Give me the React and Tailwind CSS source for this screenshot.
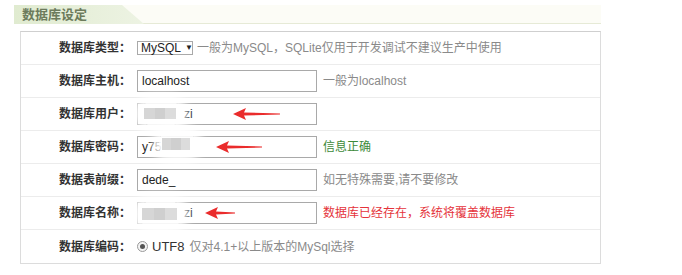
const font = "font-['Liberation_Sans','Noto_Sans_CJK_SC',sans-serif]";

function Arrow({ className, width }) {
  return (
    <svg className={className} width={width} height="14" viewBox={`0 0 ${width} 14`}>
      <path d={`M0 7 L13 1 L11 5.5 L${width} 6.5 L${width} 7.5 L11 8.5 L13 13 Z`} fill="#ea2c2c" />
    </svg>
  );
}

function Blur({ className }) {
  return (
    <div className={`absolute rounded-full bg-white/90 shadow-[0_0_8px_6px_rgba(255,255,255,0.9)] ${className}`}>
      <div className="absolute left-[4px] right-[6px] top-[7px] bottom-[7px] flex">
        <div className="flex-1 bg-[#d6d6d6]" />
        <div className="flex-1 bg-[#cfcfcf]" />
        <div className="flex-1 bg-[#dcdcdc]" />
      </div>
    </div>
  );
}

function Row({ label, children, last }) {
  return (
    <div className={`flex h-[33px] items-center ${last ? "" : "border-b border-[#ececec]"}`}>
      <div className="w-[110px] shrink-0 text-right text-[12px] font-bold text-[#333]">{label}</div>
      <div className="ml-[6px] flex items-center">{children}</div>
    </div>
  );
}

function Input({ value }) {
  return (
    <div className="flex h-[22px] w-[180px] items-center border border-[#a9a9a9] bg-white px-[4px] text-[12px] text-[#222]">
      {value}
    </div>
  );
}

export default function App() {
  return (
    <div className={`relative h-[275px] w-[682px] overflow-hidden bg-white pl-[14px] pt-[5px] ${font}`}>
      <div className="relative h-[19px] w-[587px] border-b border-[#e6ead6] bg-[#fcfcf6]">
        <div className="absolute left-0 top-0 flex h-[19px] w-[130px] items-center bg-gradient-to-r from-[#e0ebd0] to-[#edf3e3] pl-[8px] text-[13px] font-bold text-[#6c7b5c] [clip-path:polygon(0_0,108px_0,130px_100%,0_100%)]">
          数据库设定
        </div>
      </div>
      <div className="ml-[6px] mt-[7px] w-[581px] border border-[#dcdcdc] border-t-[#cfcfcf]">
        <Row label="数据库类型：">
          <div className="flex h-[14px] w-[56px] items-center border border-[#a9a9a9] pl-[3px] text-[12px] text-[#222]">
            MySQL <span className="ml-[4px] text-[8px]">▼</span>
          </div>
          <span className="ml-[4px] text-[12px] text-[#8a8a8a]">一般为MySQL，SQLite仅用于开发调试不建议生产中使用</span>
        </Row>
        <Row label="数据库主机：">
          <Input value="localhost" />
          <span className="ml-[6px] text-[12px] text-[#8a8a8a]">一般为localhost</span>
        </Row>
        <Row label="数据库用户：">
          <Input value={<span className="ml-[42px]">zi</span>} />
        </Row>
        <Row label="数据库密码：">
          <Input value="y75" />
          <span className="ml-[6px] text-[12px] text-[#3d8a3a]">信息正确</span>
        </Row>
        <Row label="数据表前缀：">
          <Input value="dede_" />
          <span className="ml-[6px] text-[12px] text-[#8a8a8a]">如无特殊需要,请不要修改</span>
        </Row>
        <Row label="数据库名称：">
          <Input value={<span className="ml-[42px]">zi</span>} />
          <span className="ml-[6px] text-[12px] text-[#e5333b]">数据库已经存在，系统将覆盖数据库</span>
        </Row>
        <Row label="数据库编码：" last>
          <div className="flex h-[11px] w-[11px] items-center justify-center rounded-full border border-[#9a9a9a] bg-[#f4f4f4]">
            <div className="h-[5px] w-[5px] rounded-full bg-[#555]" />
          </div>
          <span className="ml-[4px] text-[13px] text-[#333]">UTF8</span>
          <span className="ml-[5px] text-[12px] text-[#8a8a8a]">仅对4.1+以上版本的MySql选择</span>
        </Row>
      </div>

      <Blur className="left-[140px] top-[101px] h-[25px] w-[42px]" />
      <Blur className="left-[158px] top-[131px] h-[26px] w-[38px]" />
      <Blur className="left-[138px] top-[201px] h-[26px] w-[45px]" />

      <Arrow className="absolute left-[233px] top-[107px]" width={47} />
      <Arrow className="absolute left-[216px] top-[140px]" width={46} />
      <Arrow className="absolute left-[205px] top-[206px]" width={30} />
    </div>
  );
}
